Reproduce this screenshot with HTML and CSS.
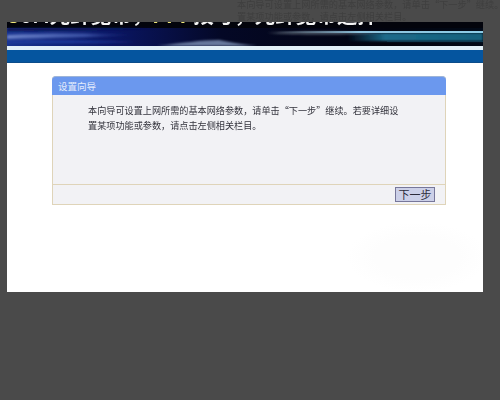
FILE: index.html
```html
<!DOCTYPE html>
<html lang="zh-CN">
<head>
<meta charset="utf-8">
<title>设置向导</title>
<link rel="stylesheet" href="styles.css">
</head>
<body>
<div class="note">
  <p>本向导可设置上网所需的基本网络参数，请单击“下一步”继续。若要详细设</p>
  <p>置某项功能或参数，请点击左侧相关栏目。</p>
</div>
<main class="page">
  <header class="banner">
    <svg class="banner-art" width="476" height="24" viewBox="0 0 476 24" aria-hidden="true">
      <defs>
        <linearGradient id="base" x1="0" x2="1" y1="0" y2="0">
          <stop offset="0" stop-color="#1a3590"/>
          <stop offset="0.22" stop-color="#0a1664"/>
          <stop offset="0.45" stop-color="#040826"/>
          <stop offset="0.8" stop-color="#02040f"/>
          <stop offset="1" stop-color="#020a18"/>
        </linearGradient>
        <linearGradient id="streak" x1="0" x2="1" y1="0" y2="0">
          <stop offset="0" stop-color="#6a80c6"/>
          <stop offset="0.6" stop-color="#4a64b8" stop-opacity="0.7"/>
          <stop offset="1" stop-color="#1a2c80" stop-opacity="0"/>
        </linearGradient>
        <linearGradient id="teal" x1="0" x2="1" y1="0" y2="0">
          <stop offset="0" stop-color="#176080" stop-opacity="0"/>
          <stop offset="0.28" stop-color="#1b6a8a"/>
          <stop offset="1" stop-color="#17607c"/>
        </linearGradient>
        <linearGradient id="tealline" x1="0" x2="1" y1="0" y2="0">
          <stop offset="0" stop-color="#8fa8b8" stop-opacity="0"/>
          <stop offset="0.4" stop-color="#8fc4de"/>
          <stop offset="1" stop-color="#8ccbe6"/>
        </linearGradient>
        <filter id="soft" x="-5%" y="-50%" width="110%" height="200%"><feGaussianBlur stdDeviation="0.8"/></filter>
      </defs>
      <rect width="476" height="24" fill="url(#base)"/>
      <rect width="476" height="6" fill="#03040c"/>
      <g filter="url(#soft)">
        <path d="M0 6H150C110 8 60 8 0 9Z" fill="#0a1550"/>
        <path d="M0 13C40 11 80 11 130 13C90 15 40 16 0 17Z" fill="url(#streak)"/>
        <path d="M0 19C50 18 90 19 130 20C90 21 40 21 0 21Z" fill="#1f3a9c"/>
        <path d="M150 24C175 21 195 18 212 18C222 20 232 22 250 24Z" fill="#66789c"/>
        <path d="M260 11C290 9 330 9 378 11C340 13 290 13 260 11Z" fill="#4d5666"/>
        <rect x="340" y="11" width="136" height="8" fill="url(#teal)"/>
      </g>
      <rect x="270" y="9" width="206" height="2" fill="url(#tealline)"/>
      <rect x="380" y="19" width="96" height="1" fill="#0f3a50"/>
    </svg>
    <div class="banner-text"><span class="gold">5</span>0M光纤宽带，<span class="gold">PPP</span>拨号，光纤宽带选择</div>
  </header>
  <div class="strip"></div>
  <section class="card">
    <h1 class="card-title">设置向导</h1>
    <div class="card-body">
      <p>本向导可设置上网所需的基本网络参数，请单击“下一步”继续。若要详细设</p>
      <p>置某项功能或参数，请点击左侧相关栏目。</p>
    </div>
    <div class="card-foot"><button class="next" type="button">下一步</button></div>
  </section>
</main>
</body>
</html>
```
FILE: styles.css
```css
html, body {
  margin: 0;
  height: 400px;
  overflow: hidden;
  background: #4a4a4a;
  font-family: "Noto Sans CJK SC", "Liberation Sans", sans-serif;
}
p { margin: 0; }
.note {
  height: 22px;
  box-sizing: border-box;
  padding: 0 0 0 237px;
  overflow: hidden;
  color: #3f3f3f;
  font-size: 9.2px;
  line-height: 12px;
  white-space: nowrap;
  filter: blur(0.4px);
}
.note p:first-child { margin-top: -2px; }
.page {
  position: relative;
  box-sizing: border-box;
  width: 476px;
  height: 270px;
  margin-left: 7px;
  padding-bottom: 1px;
  background:
    radial-gradient(ellipse 70px 35px at 410px 235px, #fdfdfd 60%, #fff 100%),
    #fff;
}
.banner {
  position: relative;
  height: 24px;
  overflow: hidden;
}
.banner-art { display: block; }
.banner-text {
  position: absolute;
  left: 1px;
  top: -22px;
  color: #f4f4f4;
  font-size: 20.5px;
  font-weight: 700;
  line-height: 28px;
  white-space: nowrap;
  filter: blur(0.4px);
}
.gold { color: #f0e878; }
.strip {
  height: 12px;
  margin-top: 4px;
  background: #05559f;
  border-bottom: 1px solid #0b4c8a;
  box-shadow: 0 -4px 0 #e2f0f8;
}
.card {
  margin: 13px 37px 0 45px;
  border: 1px solid #dfd4b9;
  border-top: 0;
  border-radius: 4px 4px 0 0;
  background: #f2f2f5;
}
.card-title {
  margin: 0 -1px;
  padding-left: 6px;
  height: 18px;
  border-top: 1px solid #9db4d8;
  border-radius: 4px 4px 0 0;
  background: #6b98ee;
  color: #e3ecfb;
  font-size: 9.5px;
  font-weight: 400;
  line-height: 18px;
}
.card-body {
  height: 89px;
  box-sizing: border-box;
  padding: 8px 0 0 35px;
  color: #33333c;
  font-size: 9.15px;
  line-height: 14.5px;
  white-space: nowrap;
  filter: blur(0.25px);
}
.card-foot {
  display: flex;
  justify-content: flex-end;
  align-items: center;
  height: 19px;
  padding-right: 10px;
  border-top: 1px solid #dfd4b9;
}
.next {
  width: 40px;
  height: 15px;
  padding: 0;
  border: 1px solid #77779a;
  border-radius: 0;
  background: #ccd0e8;
  color: #2c2c3a;
  font-family: inherit;
  font-size: 11px;
  line-height: 13px;
}
```
